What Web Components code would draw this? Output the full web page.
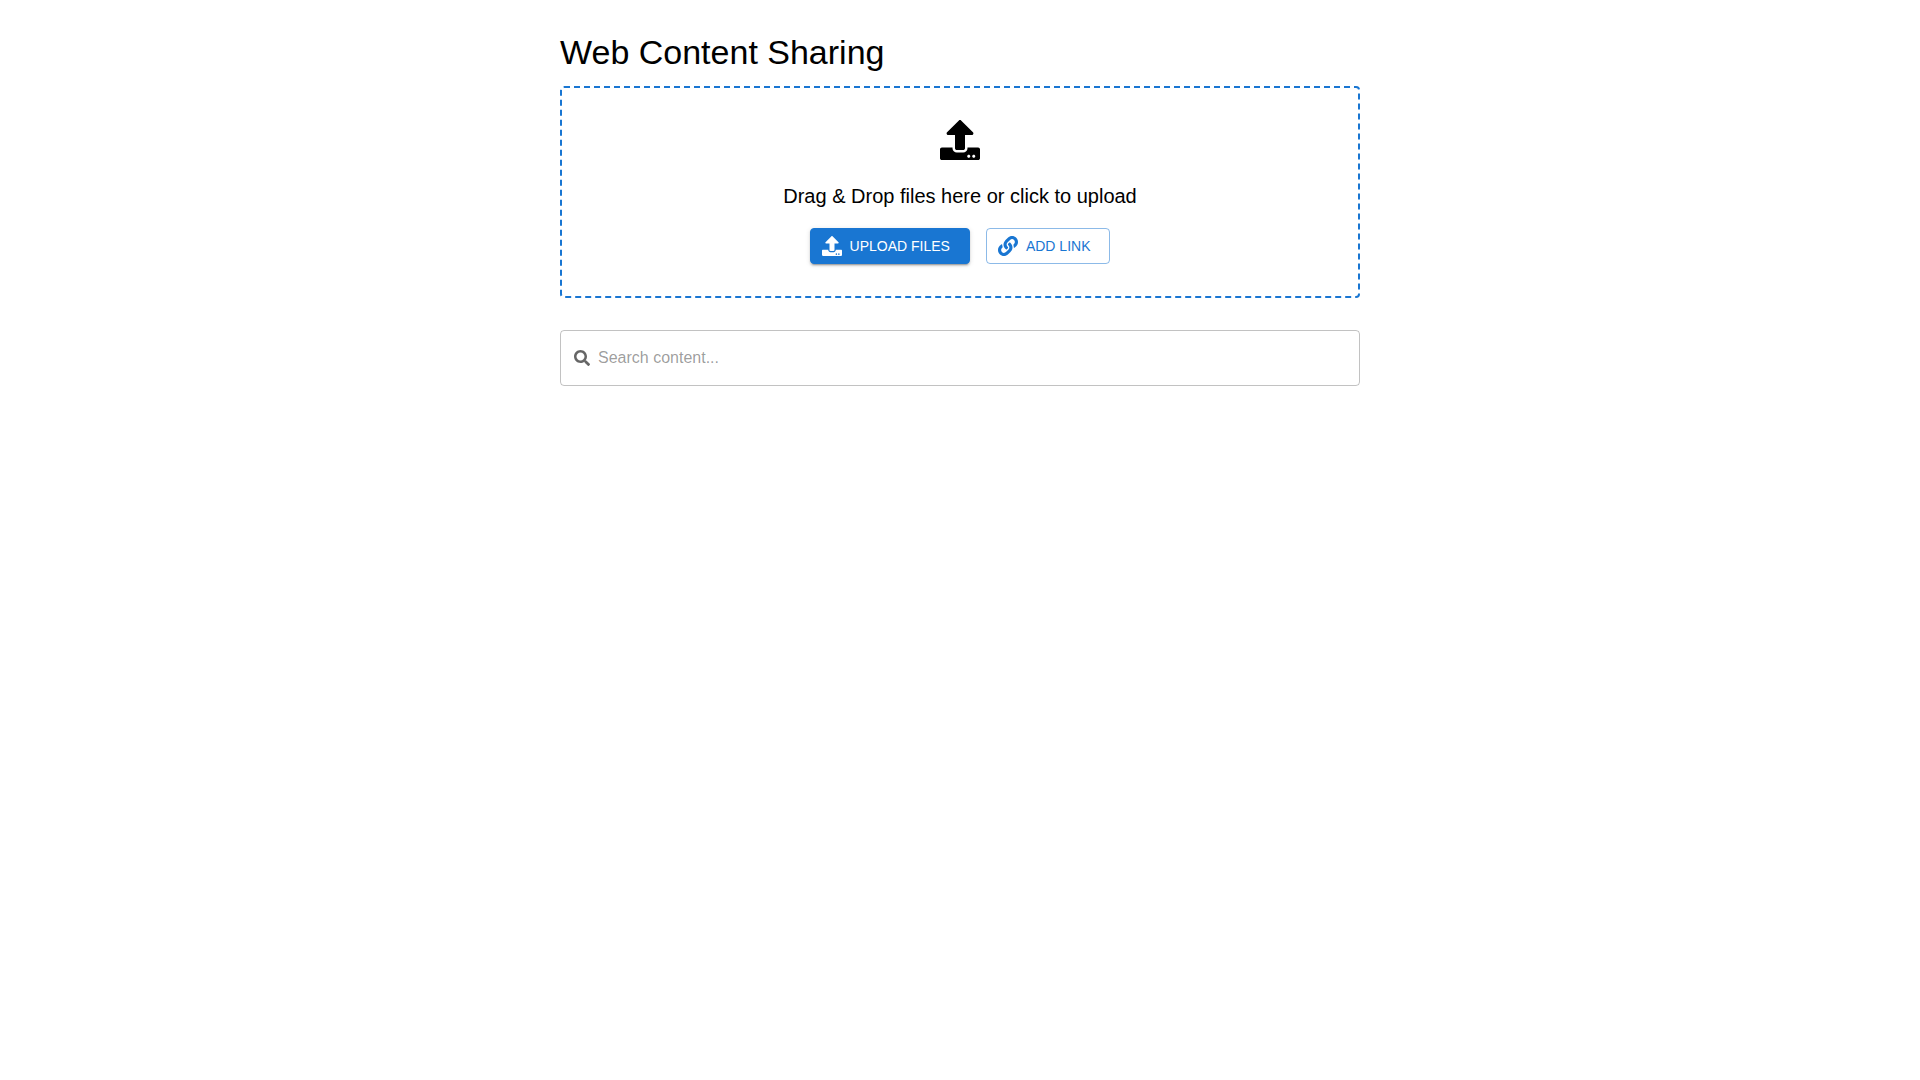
<!DOCTYPE html>
<html lang="en">
<head>
<meta charset="utf-8">
<meta name="viewport" content="width=device-width, initial-scale=1">
<title>Web Content Sharing</title>
<style>
  body { margin: 0; background: #fff; color: #000; font-family: "Liberation Sans", Arial, sans-serif; }
</style>
</head>
<body>
<sharing-page>
  <span slot="title">Web Content Sharing</span>
  <drop-zone>
    <span slot="hint">Drag &amp; Drop files here or click to upload</span>
    <action-button slot="actions" variant="contained" icon="upload">UPLOAD FILES</action-button>
    <action-button slot="actions" variant="outlined" icon="link">ADD LINK</action-button>
  </drop-zone>
  <search-field placeholder="Search content..."></search-field>
</sharing-page>

<script>
const ICONS = {
  upload: 'M296 384h-80c-13.3 0-24-10.7-24-24V192h-87.7c-17.8 0-26.7-21.5-14.1-34.1L242.3 5.7c7.5-7.5 19.8-7.5 27.3 0l152.2 152.2c12.6 12.6 3.7 34.1-14.1 34.1H320v168c0 13.3-10.7 24-24 24zm216-8v112c0 13.3-10.7 24-24 24H24c-13.3 0-24-10.7-24-24V376c0-13.3 10.7-24 24-24h136v8c0 30.9 25.1 56 56 56h80c30.9 0 56-25.1 56-56v-8h136c13.3 0 24 10.7 24 24zm-124 88c0-11-9-20-20-20s-20 9-20 20 9 20 20 20 20-9 20-20zm64 0c0-11-9-20-20-20s-20 9-20 20 9 20 20 20 20-9 20-20z',
  link: 'M326.612 185.391c59.747 59.809 58.927 155.698.36 214.59-.11.12-.24.25-.36.37l-67.2 67.2c-59.27 59.27-155.699 59.262-214.96 0-59.27-59.26-59.27-155.7 0-214.96l37.106-37.106c9.84-9.84 26.786-3.3 27.294 10.606.648 17.722 3.826 35.527 9.69 52.721 1.986 5.822.567 12.262-3.783 16.612l-13.087 13.087c-28.026 28.026-28.905 73.66-1.155 101.96 28.024 28.579 74.086 28.749 102.325.51l67.2-67.19c28.191-28.191 28.073-73.757 0-101.83-3.701-3.694-7.429-6.564-10.341-8.569a16.037 16.037 0 0 1-6.947-12.606c-.396-10.567 3.348-21.456 11.698-29.806l21.054-21.055c5.521-5.521 14.182-6.199 20.584-1.731a152.482 152.482 0 0 1 20.522 17.197zM467.547 44.449c-59.261-59.262-155.69-59.27-214.96 0l-67.2 67.2c-.12.12-.25.25-.36.37-58.566 58.892-59.387 154.781.36 214.59a152.454 152.454 0 0 0 20.521 17.196c6.402 4.468 15.064 3.789 20.584-1.731l21.054-21.055c8.35-8.35 12.094-19.239 11.698-29.806a16.037 16.037 0 0 0-6.947-12.606c-2.912-2.005-6.64-4.875-10.341-8.569-28.073-28.073-28.191-73.639 0-101.83l67.2-67.19c28.239-28.239 74.3-28.069 102.325.51 27.75 28.3 26.872 73.934-1.155 101.96l-13.087 13.087c-4.35 4.35-5.769 10.79-3.783 16.612 5.864 17.194 9.042 34.999 9.69 52.721.509 13.906 17.454 20.446 27.294 10.606l37.106-37.106c59.271-59.259 59.271-155.699.001-214.959z',
  search: 'M505 442.7L405.3 343c-4.5-4.5-10.6-7-17-7H372c27.6-35.3 44-79.7 44-128C416 93.1 322.9 0 208 0S0 93.1 0 208s93.1 208 208 208c48.3 0 92.7-16.4 128-44v16.3c0 6.4 2.5 12.5 7 17l99.7 99.7c9.4 9.4 24.6 9.4 33.9 0l28.3-28.3c9.4-9.4 9.4-24.6.1-34zM208 336c-70.7 0-128-57.2-128-128 0-70.7 57.2-128 128-128 70.7 0 128 57.2 128 128 0 70.7-57.2 128-128 128z'
};

customElements.define('app-icon', class extends HTMLElement {
  connectedCallback() {
    if (this.shadowRoot) return;
    this.attachShadow({ mode: 'open' }).innerHTML = `
      <style>
        :host { display: block; flex: none; width: var(--icon-size, 20px); height: var(--icon-size, 20px); }
        svg { display: block; width: 100%; height: 100%; fill: currentColor; }
      </style>
      <svg viewBox="0 0 512 512" aria-hidden="true"><path d="${ICONS[this.getAttribute('name')]}"/></svg>`;
  }
});

customElements.define('action-button', class extends HTMLElement {
  connectedCallback() {
    if (this.shadowRoot) return;
    this.attachShadow({ mode: 'open' }).innerHTML = `
      <style>
        :host { display: block; }
        button {
          display: flex; align-items: center; gap: 8px; box-sizing: border-box;
          margin: 0; padding: 5px 19px 5px 11px;
          border: 1px solid rgba(25, 118, 210, 0.5); border-radius: 4px;
          background: transparent; color: #1976d2;
          font: 14px/24px "Liberation Sans", Arial, sans-serif; cursor: pointer;
        }
        :host([variant="contained"]) button {
          border-color: #1976d2; background: #1976d2; color: #fff;
          box-shadow: 0 3px 1px -2px rgba(0,0,0,.2), 0 2px 2px 0 rgba(0,0,0,.14), 0 1px 5px 0 rgba(0,0,0,.12);
        }
      </style>
      <button type="button"><app-icon name="${this.getAttribute('icon')}"></app-icon><span><slot></slot></span></button>`;
  }
});

customElements.define('drop-zone', class extends HTMLElement {
  connectedCallback() {
    if (this.shadowRoot) return;
    this.attachShadow({ mode: 'open' }).innerHTML = `
      <style>
        :host {
          display: flex; flex-direction: column; align-items: center;
          padding: 32px; border: 2px dashed #1976d2; border-radius: 4px; cursor: pointer;
        }
        app-icon { --icon-size: 40px; margin-bottom: 20px; }
        p { margin: 0 0 16px; font-size: 20px; line-height: 32px; text-align: center; }
        .actions { display: flex; flex-wrap: wrap; justify-content: center; gap: 16px; }
      </style>
      <app-icon name="upload"></app-icon>
      <p><slot name="hint"></slot></p>
      <div class="actions"><slot name="actions"></slot></div>`;
  }
});

customElements.define('search-field', class extends HTMLElement {
  connectedCallback() {
    if (this.shadowRoot) return;
    const text = this.getAttribute('placeholder');
    this.attachShadow({ mode: 'open' }).innerHTML = `
      <style>
        :host { display: block; }
        label {
          display: flex; align-items: center; gap: 8px;
          padding: 0 13px; border: 1px solid rgba(0, 0, 0, 0.24); border-radius: 4px; cursor: text;
        }
        label:focus-within { border-color: #1976d2; }
        app-icon { --icon-size: 16px; color: rgba(0, 0, 0, 0.6); }
        input {
          flex: 1; min-width: 0; margin: 0; padding: 15px 0; border: 0; outline: 0; background: none;
          height: 24px; color: rgba(0, 0, 0, 0.87);
          font: 16px/24px "Liberation Sans", Arial, sans-serif;
        }
        input::placeholder { color: rgba(0, 0, 0, 0.4); opacity: 1; }
      </style>
      <label><app-icon name="search"></app-icon><input type="text" aria-label="Search content" placeholder="${text}"></label>`;
  }
});

customElements.define('sharing-page', class extends HTMLElement {
  connectedCallback() {
    if (this.shadowRoot) return;
    this.attachShadow({ mode: 'open' }).innerHTML = `
      <style>
        :host { display: block; }
        main { box-sizing: border-box; max-width: 848px; margin: 0 auto; padding: 32px 24px; }
        h1 { margin: 0 0 14px; font-size: 34px; line-height: 40px; font-weight: 400; }
        .content { display: flex; flex-direction: column; gap: 32px; }
      </style>
      <main>
        <h1><slot name="title"></slot></h1>
        <div class="content"><slot></slot></div>
      </main>`;
  }
});
</script>
</body>
</html>
